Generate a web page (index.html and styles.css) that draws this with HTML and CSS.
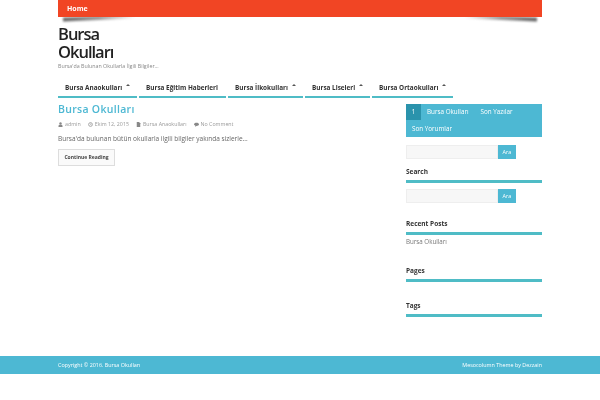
FILE: index.html
```html
<!DOCTYPE html>
<html lang="tr">
<head>
<meta charset="utf-8">
<title>Bursa Okulları</title>
<link rel="stylesheet" href="styles.css">
</head>
<body>
<div class="wrap">
  <nav class="topbar"><a class="top-link">Home</a></nav>
  <header class="brand">
    <h1 class="site-title">Bursa<br>Okulları</h1>
    <p class="tagline">Bursa'da Bulunan Okullarla İlgili Bilgiler...</p>
  </header>
  <nav class="menu">
    <a class="menu-item w1">Bursa Anaokulları<span class="caret"></span></a>
    <a class="menu-item w2">Bursa Eğitim Haberleri</a>
    <a class="menu-item w3">Bursa İlkokulları<span class="caret"></span></a>
    <a class="menu-item w4">Bursa Liseleri<span class="caret"></span></a>
    <a class="menu-item w5">Bursa Ortaokulları<span class="caret"></span></a>
  </nav>
  <div class="columns">
    <main class="content">
      <h2 class="post-title">Bursa Okulları</h2>
      <div class="meta">
        <span class="meta-item"><svg class="ic" viewBox="0 0 10 10"><circle cx="5" cy="3" r="2.4"/><path d="M1 10V8q0-2.5 2.5-2.5h3Q9 5.500 9 8v2z"/></svg>admin</span>
        <span class="meta-item"><svg class="ic" viewBox="0 0 10 10"><circle cx="5" cy="5" r="3.800" fill="none" stroke="#888" stroke-width="1.400"/><path d="M5 3v2.300h2" fill="none" stroke="#888"/></svg>Ekim 12, 2015</span>
        <span class="meta-item"><svg class="ic" viewBox="0 0 10 10"><path d="M1.500 0h4.500l2.500 2.500V10h-7z"/></svg>Bursa Anaokulları</span>
        <span class="meta-item"><svg class="ic" viewBox="0 0 10 10"><path d="M5 1.500c2.800 0 5 1.400 5 3.200S7.800 8 5 8L2 9.500l.7-2.100C1 6.800 0 5.800 0 4.700 0 2.900 2.200 1.500 5 1.500z"/></svg>No Comment</span>
      </div>
      <p class="excerpt">Bursa'da bulunan bütün okullarla ilgili bilgiler yakında sizlerle...</p>
      <a class="more">Continue Reading</a>
    </main>
    <aside class="sidebar">
      <div class="tabs">
        <span class="tab active">1</span><span class="tab">Bursa Okulları</span><span class="tab">Son Yazılar</span><span class="tab">Son Yorumlar</span>
      </div>
      <form class="search first"><span class="field"></span><span class="go">Ara</span></form>
      <h3 class="widget-title">Search</h3>
      <form class="search"><span class="field"></span><span class="go">Ara</span></form>
      <h3 class="widget-title recent">Recent Posts</h3>
      <a class="widget-link">Bursa Okulları</a>
      <h3 class="widget-title pages">Pages</h3>
      <h3 class="widget-title tags">Tags</h3>
    </aside>
  </div>
</div>
<footer class="footer">
  <div class="footer-in"><span>Copyright © 2016. Bursa Okulları</span><span>Mesocolumn Theme by Dezzain</span></div>
</footer>
</body>
</html>
```
FILE: styles.css
```css
* { box-sizing: border-box; }
html { background: #fff; }
body { margin: 0; padding: 0; font-family: "Open Sans", "Liberation Sans", sans-serif; color: #333; height: 400px; overflow: hidden; }
.wrap { width: 484px; margin: 0 auto; height: 356px; will-change: transform; }
.topbar { position: relative; height: 17px; background: #f14524; padding-left: 9px; }
.topbar::before, .topbar::after { content: ""; position: absolute; z-index: -1; top: 16px; height: 4px; width: 72px; filter: blur(0.8px); }
.topbar::before { left: 5px; background: linear-gradient(to right, #666, #999 50%, rgba(150,150,150,0)); transform: rotate(-2.500deg); }
.topbar::after { right: 5px; background: linear-gradient(to left, #666, #999 50%, rgba(150,150,150,0)); transform: rotate(2.500deg); }
.top-link { display: block; font-size: 7px; font-weight: 700; color: #fff; line-height: 17px; }
.brand { height: 62px; padding-top: 8px; }
.site-title { margin: 0; font-size: 16.500px; line-height: 18px; font-weight: 600; letter-spacing: -1px; color: #222; }
.tagline { margin: 2px 0 0; font-size: 5.300px; line-height: 7px; color: #888; }
.menu { display: flex; gap: 2px; height: 20px; }
.menu-item { position: relative; display: block; height: 19px; padding-left: 7px; border-bottom: 2px solid #4fbcc6; font-size: 6.400px; font-weight: 700; line-height: 17px; color: #333; white-space: nowrap; }
.w1 { width: 79px; }
.w2 { width: 87px; }
.w3 { width: 75px; }
.w4 { width: 65px; }
.w5 { width: 81px; }
.caret { position: absolute; top: 5px; right: 7px; width: 0; height: 0; border-left: 2px solid transparent; border-right: 2px solid transparent; border-bottom: 2px solid #555; }
.columns { display: flex; justify-content: space-between; }
.content { width: 330px; padding-top: 3px; }
.post-title { margin: 0; font-size: 10.500px; line-height: 15px; font-weight: 600; color: #4db8d3; letter-spacing: 0.3px; }
.meta { display: flex; gap: 7px; margin-top: 3px; font-size: 5.300px; line-height: 8px; color: #999; }
.meta-item { display: flex; align-items: center; gap: 2px; }
.ic { width: 5px; height: 5px; fill: #888; }
.excerpt { margin: 6px 0 0; font-size: 6.500px; line-height: 10px; color: #666; }
.more { display: block; width: 57px; height: 17px; margin-top: 5px; border: 1px solid #ddd; background: #fafafa; font-size: 5px; font-weight: 700; line-height: 15px; text-align: center; color: #444; }
.sidebar { width: 136px; padding-top: 5px; }
.tabs { display: flex; flex-wrap: wrap; background: #4db8d3; height: 33px; }
.tab { height: 16px; line-height: 16px; padding: 0 6px; font-size: 6.300px; color: #fff; white-space: nowrap; }
.tab.active { width: 15px; background: #2a93ac; padding: 0; text-align: center; }
.tab:nth-child(3) { padding-right: 20px; }
.search { display: flex; height: 14px; }
.search.first { margin-top: 8px; }
.field { width: 92px; background: #f7f7f7; border: 1px solid #eee; }
.go { width: 18px; background: #4db8d3; color: #fff; font-size: 5.500px; line-height: 14px; text-align: center; }
.widget-title { margin: 8px 0 6px; height: 16px; border-bottom: 3px solid #4fbcc6; font-size: 6.500px; font-weight: 700; line-height: 10px; color: #333; }
.widget-title.recent { margin-top: 16px; margin-bottom: 2px; }
.widget-title.pages { margin-top: 19px; margin-bottom: 0; }
.widget-title.tags { margin-top: 19px; margin-bottom: 0; }
.widget-link { display: block; font-size: 6.200px; line-height: 10px; color: #777; }
.footer { height: 18px; background: #4db8d3; }
.footer-in { width: 484px; height: 100%; margin: 0 auto; display: flex; justify-content: space-between; align-items: center; font-size: 5.400px; color: #fff; will-change: transform; }
```
